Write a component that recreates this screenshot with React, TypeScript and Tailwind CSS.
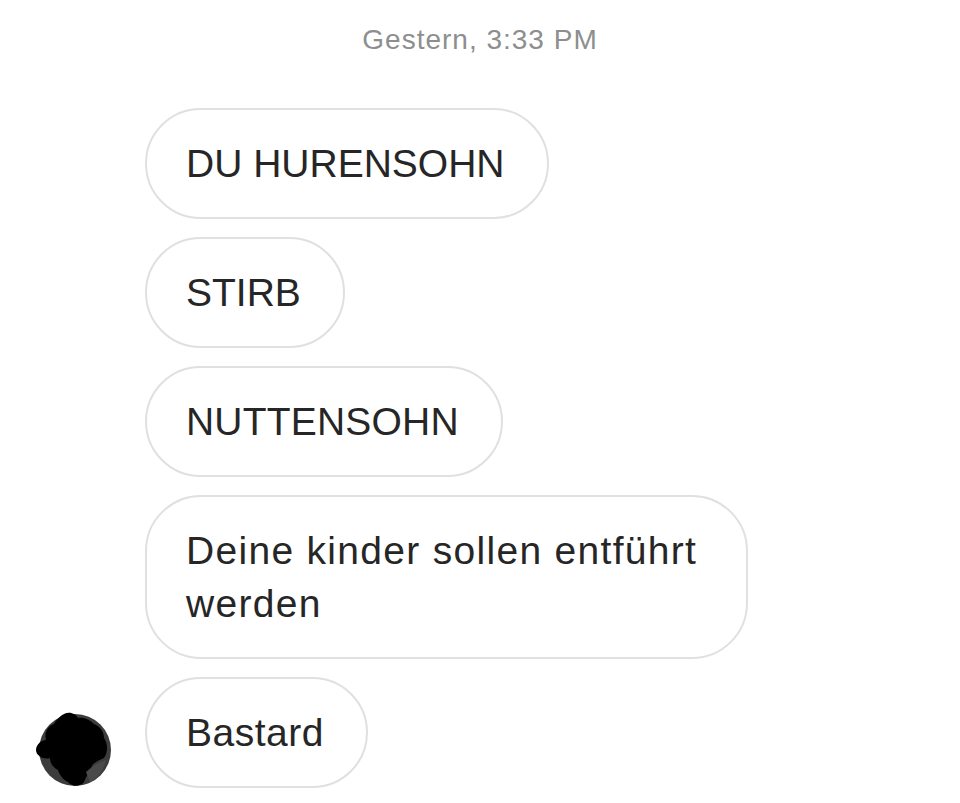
import React from "react";

const font = { fontFamily: '"Liberation Sans", Arial, sans-serif' };

function Bubble({ children, className = "" }: { children: React.ReactNode; className?: string }) {
  return (
    <div
      className={
        "inline-block max-w-[603px] rounded-[56px] border-2 border-[#e0e0e0] bg-white pl-[39px] pr-[42px] py-[27px] text-[39px] leading-[53px] text-[#262626] " +
        className
      }
    >
      {children}
    </div>
  );
}

function Avatar() {
  return (
    <svg width="80" height="78" viewBox="0 0 80 78" className="shrink-0">
      <circle cx="41" cy="40" r="36" fill="#3c3c3c" />
      <path
        d="M30 4 C36 1 42 4 44 8 C50 7 56 10 60 14 C66 16 70 22 70 28 C74 34 74 42 70 48 C66 50 60 52 58 56 C56 62 52 66 50 72 C46 77 38 77 34 72 C30 70 26 66 24 60 C20 58 16 54 16 48 C10 50 2 46 2 40 C2 34 8 30 12 30 C10 22 14 16 20 14 C22 10 26 6 30 4 Z"
        fill="#000"
      />
      <path d="M52 62 C58 56 66 52 72 50 C70 60 64 68 56 72 Z" fill="#4a4a4a" />
    </svg>
  );
}

export default function App() {
  return (
    <div className="min-h-[803px] w-[960px] bg-white" style={font}>
      <div className="pt-[23px] text-center text-[28px] leading-[34px] tracking-[1px] text-[#8e8e8e]">Gestern, 3:33 PM</div>
      <div className="mt-[51px] flex flex-col gap-[18px]">
        <div className="pl-[145px]">
          <Bubble>DU HURENSOHN</Bubble>
        </div>
        <div className="pl-[145px]">
          <Bubble>STIRB</Bubble>
        </div>
        <div className="pl-[145px]">
          <Bubble className="tracking-[0.2px]">NUTTENSOHN</Bubble>
        </div>
        <div className="pl-[145px]">
          <Bubble className="w-[603px] tracking-[1.3px]">Deine kinder sollen entführt werden</Bubble>
        </div>
        <div className="flex items-end gap-[31px] pl-[34px]">
          <Avatar />
          <Bubble className="tracking-[0.5px]">Bastard</Bubble>
        </div>
      </div>
    </div>
  );
}
